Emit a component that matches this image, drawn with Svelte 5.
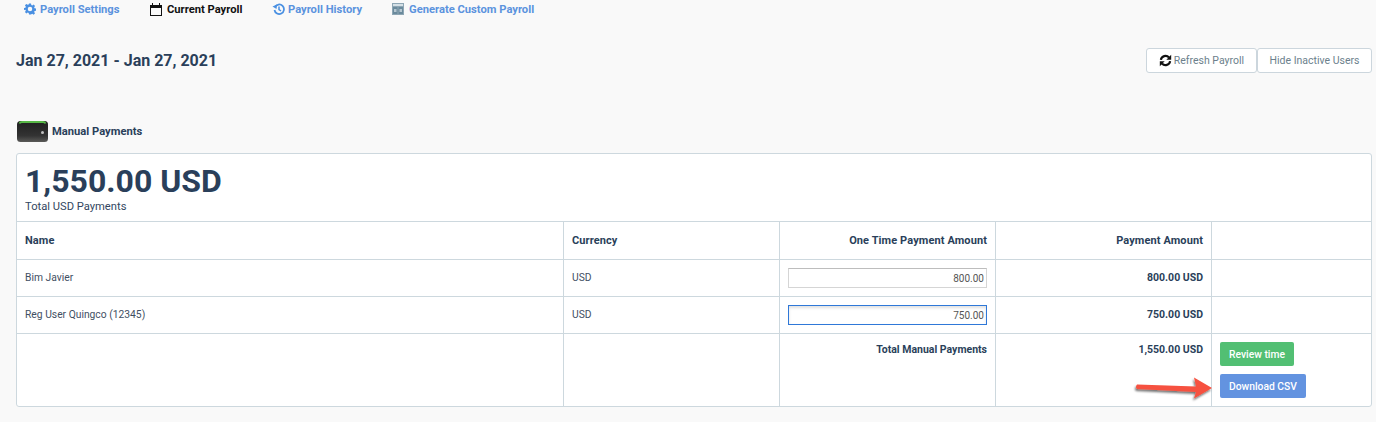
<script lang="ts">
	type Row = { name: string; currency: string; amount: string; total: string; focused?: boolean }

	const rows: Row[] = [
		{ name: 'Bim Javier', currency: 'USD', amount: '800.00', total: '800.00 USD' },
		{ name: 'Reg User Quingco (12345)', currency: 'USD', amount: '750.00', total: '750.00 USD', focused: true }
	]
</script>

<div class="page">
	<nav class="tabs">
		<a class="tab settings" href="#settings">
			<svg width="12" height="12" viewBox="0 0 24 24"><path fill="#4a90e2" fill-rule="evenodd" d="M10 1h4l.6 3.200 2 .8 2.700-1.800 2.800 2.800-1.800 2.700.8 2 3.200.6v4l-3.200.6-.8 2 1.800 2.700-2.800 2.800-2.700-1.800-2 .8L14 23h-4l-.6-3.200-2-.8-2.700 1.800-2.800-2.800 1.800-2.700-.8-2L-.3 14v-4l3.200-.6.8-2L1.900 4.700l2.800-2.800 2.700 1.800 2-.8zM12 7.500a4.500 4.500 0 1 0 0 9 4.500 4.500 0 0 0 0-9z"/></svg>
			Payroll Settings
		</a>
		<a class="tab current" href="#current">
			<svg width="12" height="13" viewBox="0 0 12 13"><path fill="#111" d="M0 2h2V0h1v2h6V0h1v2h2v11H0zM1 5v7h10V5z"/></svg>
			Current Payroll
		</a>
		<a class="tab history" href="#history">
			<svg width="13" height="12" viewBox="0 0 24 24"><path fill="none" stroke="#4a90e2" stroke-width="3.500" d="M5 8a9.500 9.500 0 1 1-1 6"/><path fill="#4a90e2" d="M0 7l8 5 1-9z"/><path fill="none" stroke="#4a90e2" stroke-width="3" d="M13 7v6l4 3"/></svg>
			Payroll History
		</a>
		<a class="tab custom" href="#custom">
			<svg width="12" height="12" viewBox="0 0 12 12"><rect width="12" height="12" fill="#8ea6b4"/><rect x="1" y="1" width="10" height="2" fill="#d5e0e6"/><rect x="1" y="4" width="4.500" height="7" fill="#6a8a9c"/><rect x="6.500" y="4" width="4.500" height="7" fill="#6a8a9c"/><rect x="2" y="6" width="2.500" height="3" fill="#b5c6d0"/><rect x="7.500" y="6" width="2.500" height="3" fill="#b5c6d0"/></svg>
			Generate Custom Payroll
		</a>
	</nav>

	<header class="range">
		<h1>Jan 27, 2021 - Jan 27, 2021</h1>
		<div class="actions">
			<button class="ghost">
				<svg width="13" height="13" viewBox="0 0 24 24"><path fill="none" stroke="#111" stroke-width="4" d="M3.500 11A8.600 8.600 0 0 1 18.500 6.500M20.500 13A8.600 8.600 0 0 1 5.500 17.500"/><path fill="#111" d="M22.500 1.500v9h-9zM1.500 22.500v-9h9z"/></svg>
				Refresh Payroll
			</button>
			<button class="ghost">Hide Inactive Users</button>
		</div>
	</header>

	<div class="section-title">
		<svg width="31" height="21" viewBox="0 0 31 21">
			<defs>
				<linearGradient id="wallet-body" x1="0" y1="0" x2="0" y2="1">
					<stop offset="0" stop-color="#1f1f1f" />
					<stop offset="0.7" stop-color="#333" />
					<stop offset="1" stop-color="#5a5a58" />
				</linearGradient>
			</defs>
			<rect width="31" height="21" rx="3.500" fill="url(#wallet-body)"/>
			<path d="M2.500 2.500Q3 1 5 1H26Q28 1 28.500 2.500" fill="none" stroke="#58b947" stroke-width="1.800"/>
			<circle cx="25.500" cy="11.500" r="1.500" fill="#c0c0c0"/>
		</svg>
		<span>Manual Payments</span>
	</div>

	<div class="card">
		<div class="summary">
			<div class="big">1,550.00 USD</div>
			<div class="sub">Total USD Payments</div>
		</div>
		<table>
			<colgroup>
				<col class="c1" /><col class="c2" /><col class="c3" /><col class="c4" /><col />
			</colgroup>
			<thead>
				<tr>
					<th>Name</th>
					<th>Currency</th>
					<th class="right">One Time Payment Amount</th>
					<th class="right">Payment Amount</th>
					<th></th>
				</tr>
			</thead>
			<tbody>
				{#each rows as row}
					<tr class="data">
						<td class="text">{row.name}</td>
						<td class="text">{row.currency}</td>
						<td class="field"><input class:focused={row.focused} value={row.amount} /></td>
						<td class="text right strong">{row.total}</td>
						<td></td>
					</tr>
				{/each}
				<tr class="totals">
					<td></td>
					<td></td>
					<td class="right strong">Total Manual Payments</td>
					<td class="right strong">1,550.00 USD</td>
					<td class="buttons">
						<button class="btn green">Review time</button>
						<button class="btn blue">Download CSV</button>
					</td>
				</tr>
			</tbody>
		</table>
		<svg class="arrow" width="84" height="30" viewBox="0 0 84 30">
			<defs>
				<filter id="arrow-shadow" x="-10%" y="-30%" width="120%" height="170%">
					<feDropShadow dx="-1" dy="2" stdDeviation="1.200" flood-color="#000" flood-opacity="0.55" />
				</filter>
			</defs>
			<path fill="#f6513f" filter="url(#arrow-shadow)" d="M5 9.500 L64 11.500 L62 2.500 L80 13 L62 23.500 L64 17 L5 14 Q3 12 5 9.500z" />
		</svg>
	</div>
</div>

<style>
	:global(body) {
		background: #f9f9f9;
	}

	.page {
		font-family: Roboto, 'Liberation Sans', sans-serif;
		color: #2a3f5a;
		height: 422px;
		overflow: hidden;
		box-sizing: border-box;
		padding: 0 4px 0 16px;
	}

	.tabs {
		display: flex;
		height: 18px;
		align-items: center;
		padding-left: 8px;
		font-size: 11.200px;
		font-weight: 700;
	}

	.tab {
		display: flex;
		align-items: center;
		gap: 4px;
		color: #5b93de;
		text-decoration: none;
		white-space: nowrap;
	}

	.tab svg {
		flex: none;
	}

	.settings { width: 126px; }
	.current { width: 122px; color: #111; gap: 5px; }
	.history { width: 120px; gap: 3px; }
	.custom { gap: 5px; }

	.range {
		display: flex;
		justify-content: space-between;
		align-items: center;
		margin-top: 30px;
		height: 25px;
	}

	h1 {
		margin: 0;
		font-size: 16px;
		font-weight: 700;
	}

	.actions {
		display: flex;
	}

	.ghost {
		display: flex;
		align-items: center;
		gap: 2px;
		height: 25px;
		padding: 0 12px;
		background: #fff;
		border: 1px solid #ccd6dd;
		border-radius: 3px;
		font: 400 10.500px Roboto, sans-serif;
		color: #6c7f8c;
	}

	.ghost + .ghost {
		padding: 0 11.500px;
	}

	.section-title {
		display: flex;
		align-items: center;
		gap: 4px;
		margin-top: 47px;
		height: 22px;
		padding-left: 1px;
		font-size: 11.200px;
		font-weight: 700;
	}

	.card {
		position: relative;
		margin-top: 11px;
		background: #fff;
		border: 1px solid #cdd8de;
		border-radius: 3px;
		box-sizing: border-box;
		height: 254px;
		overflow: hidden;
	}

	.summary {
		height: 67px;
		padding: 9px 8px 0;
		box-sizing: border-box;
	}

	.big {
		font-size: 32px;
		font-weight: 700;
		line-height: 37px;
	}

	.sub {
		font-size: 11.200px;
		line-height: 13px;
		color: #33475f;
	}

	table {
		width: 100%;
		table-layout: fixed;
		border-collapse: collapse;
		font-size: 10.300px;
	}

	.c1 { width: 546.500px; }
	.c2 { width: 216px; }
	.c3 { width: 216px; }
	.c4 { width: 216px; }

	th,
	td {
		border: 1px solid #cdd8de;
		padding: 0 8px;
		text-align: left;
		color: #3f4f63;
		font-weight: 400;
	}

	th:first-child,
	td:first-child {
		border-left: 0;
	}

	th:last-child,
	td:last-child {
		border-right: 0;
	}

	tbody tr:last-child td {
		border-bottom: 0;
	}

	th {
		height: 37px;
		font-size: 11px;
		letter-spacing: 0.1px;
		font-weight: 700;
		color: #2a3f5a;
	}

	.data td {
		height: 36px;
	}

	.data td.text {
		padding-bottom: 2px;
		box-sizing: border-box;
	}

	.right {
		text-align: right;
	}

	td.strong {
		font-size: 10.500px;
		font-weight: 700;
		color: #2a3f5a;
	}

	.field input {
		display: block;
		width: 100%;
		height: 20px;
		box-sizing: border-box;
		padding: 0 2px;
		border: 1px solid #d5d5d5;
		border-top-color: #bdbdbd;
		text-align: right;
		font: 400 10px Roboto, sans-serif;
		color: #555;
		background: #fff;
		outline: none;
	}

	.field input.focused {
		border-color: #2f78d8;
		box-shadow: inset 0 2px 3px rgba(0, 0, 0, 0.12);
	}

	.totals td {
		height: 72px;
		vertical-align: top;
		padding-top: 9px;
	}

	.totals .buttons {
		padding-top: 8px;
	}

	.btn {
		display: block;
		height: 24px;
		padding: 0 9px;
		border: 0;
		border-radius: 2px;
		color: #fff;
		font: 500 10.300px Roboto, sans-serif;
	}

	.green {
		background: #52bf73;
		margin-bottom: 8px;
	}

	.blue {
		background: #6393e0;
	}

	.arrow {
		position: absolute;
		left: 1115px;
		top: 221px;
	}
</style>
